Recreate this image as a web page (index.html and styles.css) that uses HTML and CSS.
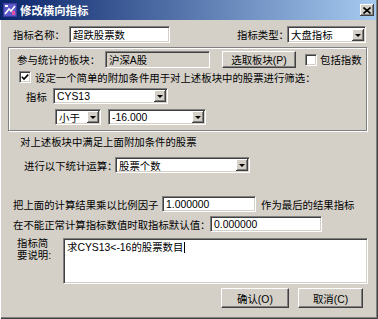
FILE: index.html
```html
<!DOCTYPE html>
<html lang="zh-CN">
<head>
  <meta charset="UTF-8" />
  <title>修改横向指标</title>
  <link rel="stylesheet" href="styles.css">
</head>
<body>
  <div class="window">

    <!-- title bar -->
    <div class="titlebar">
      <svg class="app-icon" viewBox="0 0 14 14">
        <rect x="0" y="0" width="14" height="14" fill="#3b3aa0"/>
        <rect x="1" y="1" width="12" height="12" fill="#5d58c8"/>
        <path d="M2 11 L6 6 L8 8 L12 3" stroke="#fff" stroke-width="1.6" fill="none"/>
        <rect x="9" y="8" width="3" height="4" fill="#e84fa0"/>
        <rect x="2" y="2" width="3" height="2" fill="#fff"/>
      </svg>
      <span class="title">修改横向指标</span>
      <div class="close-btn">
        <svg viewBox="0 0 8 7" width="8" height="7">
          <path d="M0.5 0.5 L7.5 6.5 M7.5 0.5 L0.5 6.5" stroke="#000" stroke-width="1.6"/>
        </svg>
      </div>
    </div>

    <!-- 指标名称 / 类型 -->
    <div class="row row-name">
      <span class="label name-label">指标名称：</span>
      <div class="field name-field">超跌股票数</div>
      <span class="label type-label">指标类型：</span>
      <div class="field select type-select"><span>大盘指标</span><span class="arrow"></span></div>
    </div>

    <!-- 板块 + 条件 -->
    <div class="group">
      <div class="row row-block">
        <span class="label block-label">参与统计的板块：</span>
        <div class="field readonly block-field">沪深A股</div>
        <div class="btn pick-btn">选取板块(P)</div>
        <span class="checkbox index-check"></span>
        <span class="label check-text">包括指数</span>
      </div>
      <div class="row row-cond">
        <span class="checkbox checked cond-check">
          <svg viewBox="0 0 8 8" width="8" height="8"><path d="M0.8 3.8 L3 6 L7.2 1.6" stroke="#000" stroke-width="1.6" fill="none"/></svg>
        </span>
        <span class="label cond-text">设定一个简单的附加条件用于对上述板块中的股票进行筛选：</span>
      </div>
      <div class="row row-ind">
        <span class="label ind-label">指标</span>
        <div class="field select ind-select"><span>CYS13</span><span class="arrow"></span></div>
      </div>
      <div class="row row-op">
        <div class="field select op-select"><span>小于</span><span class="arrow"></span></div>
        <div class="field select val-select"><span>-16.000</span><span class="arrow"></span></div>
      </div>
    </div>

    <!-- 统计运算 -->
    <div class="text-line stat-title">对上述板块中满足上面附加条件的股票</div>
    <div class="row row-calc">
      <span class="label calc-label">进行以下统计运算：</span>
      <div class="field select calc-select"><span>股票个数</span><span class="arrow"></span></div>
    </div>

    <div class="row row-factor">
      <span class="label factor-label">把上面的计算结果乘以比例因子</span>
      <div class="field factor-field">1.000000</div>
      <span class="label factor-tail">作为最后的结果指标</span>
    </div>
    <div class="row row-default">
      <span class="label default-label">在不能正常计算指标数值时取指标默认值：</span>
      <div class="field default-field">0.000000</div>
    </div>

    <div class="row row-memo">
      <span class="label memo-label">指标简<br>要说明:</span>
      <div class="field memo">求CYS13&lt;-16的股票数目<span class="caret"></span></div>
    </div>

    <div class="row row-buttons">
      <div class="btn ok-btn">确认(O)</div>
      <div class="btn cancel-btn">取消(C)</div>
    </div>

  </div>
</body>
</html>
```

FILE: styles.css
```css
* {
  box-sizing: border-box;
}

body {
  margin: 0;
  background: #d4d0c8;
  font-family: "Liberation Sans", "Noto Sans CJK SC", sans-serif;
  font-size: 10.4px;
  color: #000;
}

.window {
  width: 378px;
  height: 319px;
  background: #d4d0c8;
  box-shadow: inset 1px 0 #fff, inset -1px -1px #404040, inset -2px -2px #808080;
  overflow: hidden;
}

/* title bar */
.titlebar {
  height: 20px;
  margin-right: 2px;
  display: flex;
  align-items: center;
  background: linear-gradient(to right, #0a246a, #a6caf0);
}

.app-icon {
  width: 14px;
  height: 14px;
  margin-left: 3px;
  flex: none;
}

.title {
  margin-left: 3px;
  color: #fff;
  font-weight: bold;
  font-size: 11.4px;
  white-space: nowrap;
}

.close-btn {
  margin-left: auto;
  margin-right: 2px;
  width: 14px;
  height: 12px;
  display: flex;
  align-items: center;
  justify-content: center;
  background: #d4d0c8;
  box-shadow: inset -1px -1px #404040, inset 1px 1px #fff, inset -2px -2px #808080;
}

/* common */
.row {
  display: flex;
  align-items: center;
}

.label {
  flex: none;
  white-space: nowrap;
}

.field {
  flex: none;
  height: 16px;
  display: flex;
  align-items: center;
  padding: 0 3px;
  background: #fff;
  border: 1px solid;
  border-color: #808080 #fff #fff #808080;
  box-shadow: inset 1px 1px #404040, inset -1px -1px #d4d0c8;
  white-space: nowrap;
  overflow: hidden;
}

.field.readonly {
  background: #d4d0c8;
}

.select {
  padding-right: 1px;
}

.select .arrow {
  margin-left: auto;
  width: 12px;
  height: 12px;
  flex: none;
  position: relative;
  background: #d4d0c8;
  box-shadow: inset -1px -1px #404040, inset 1px 1px #fff, inset -2px -2px #808080;
}

.select .arrow::after {
  content: "";
  position: absolute;
  left: 3px;
  top: 5px;
  border-left: 3px solid transparent;
  border-right: 3px solid transparent;
  border-top: 3px solid #000;
}

.btn {
  flex: none;
  height: 20px;
  display: flex;
  align-items: center;
  justify-content: center;
  background: #d4d0c8;
  border: 1px solid;
  border-color: #fff #404040 #404040 #fff;
  box-shadow: inset -1px -1px #808080;
  white-space: nowrap;
}

.checkbox {
  flex: none;
  width: 12px;
  height: 12px;
  display: flex;
  align-items: center;
  justify-content: center;
  background: #fff;
  border: 1px solid;
  border-color: #808080 #fff #fff #808080;
  box-shadow: inset 1px 1px #404040, inset -1px -1px #d4d0c8;
}

/* 名称 / 类型 */
.row-name {
  margin-top: 6px;
  height: 17px;
}

.name-label { margin-left: 13px; width: 56px; }
.name-field { width: 101px; height: 17px; }
.type-label { margin-left: 67px; width: 50px; }
.type-select { width: 79px; height: 17px; }

/* group box */
.group {
  margin: 4px 0 0 8px;
  width: 359px;
  padding: 3px 0 5px;
  border: 1px solid #808080;
  box-shadow: inset 1px 1px #fff, 1px 1px #fff;
}

.row-block { height: 17px; }
.block-label { margin-left: 8px; width: 88px; }
.block-field { width: 105px; height: 17px; }
.pick-btn { margin-left: 12px; width: 74px; height: 17px; }
.index-check { margin-left: 9px; }
.check-text { margin-left: 3px; }

.row-cond { margin-top: 3px; height: 12px; }
.cond-check { margin-left: 10px; }
.cond-text { margin-left: 4px; }

.row-ind { margin-top: 5px; height: 16px; }
.ind-label { margin-left: 17px; width: 27px; }
.ind-select { width: 115px; }

.row-op { margin-top: 5px; height: 16px; }
.op-select { margin-left: 46px; width: 46px; }
.val-select { margin-left: 7px; width: 98px; }

/* 统计 */
.text-line {
  white-space: nowrap;
}

.stat-title {
  margin: 6px 0 0 20px;
  height: 12px;
  line-height: 12px;
}

.row-calc { margin-top: 8px; height: 16px; }
.calc-label { margin-left: 24px; width: 91px; }
.calc-select { width: 135px; }

.row-factor { margin-top: 23px; height: 16px; }
.factor-label { margin-left: 13px; width: 149px; }
.factor-field { width: 94px; }
.factor-tail { margin-left: 5px; }

.row-default { margin-top: 4px; height: 16px; }
.default-label { margin-left: 13px; width: 197px; }
.default-field { width: 112px; }

/* 说明 */
.row-memo {
  margin-top: 6px;
  height: 46px;
  align-items: flex-start;
}

.memo-label {
  margin-left: 17px;
  width: 46px;
  line-height: 12px;
}

.memo {
  width: 305px;
  height: 46px;
  align-items: flex-start;
  padding-top: 3px;
  line-height: 12px;
}

.caret {
  display: inline-block;
  width: 1px;
  height: 11px;
  margin-left: 1px;
  background: #000;
}

/* 按钮 */
.row-buttons { margin-top: 4px; height: 20px; }
.ok-btn { margin-left: 221px; width: 68px; }
.cancel-btn { margin-left: 9px; width: 65px; }
```
